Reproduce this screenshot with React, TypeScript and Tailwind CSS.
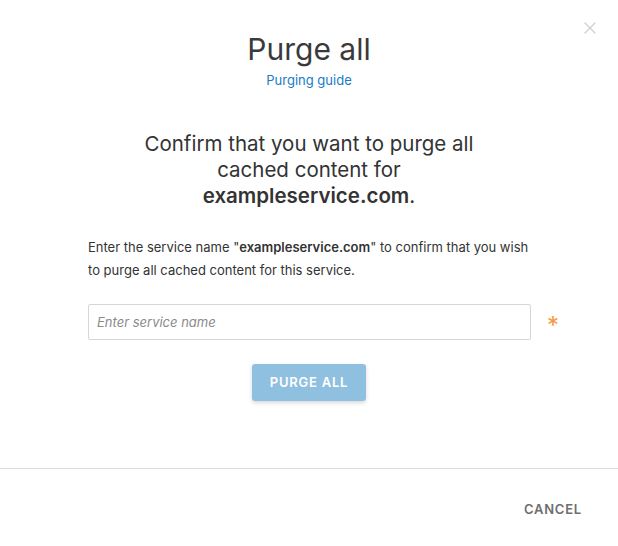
import { X } from "lucide-react";

export default function App() {
  return (
    <div
      className="relative w-[618px] h-[546px] bg-white text-[#333] flex flex-col"
      style={{ fontFamily: "Inter, 'Liberation Sans', sans-serif" }}
    >
      <button className="absolute right-[18px] top-[18px] text-[#cfcfcf]">
        <X size={20} strokeWidth={1.5} />
      </button>

      <div className="flex-1 flex flex-col items-center pt-[29px]">
        <h1 className="text-[30px] leading-[40px] text-[#3a3a3a]">Purge all</h1>
        <a className="text-[13px] leading-[16px] mt-[3px] text-[#1a7bc4]">Purging guide</a>

        <p className="mt-[43px] w-[370px] text-center text-[20.5px] leading-[26px] text-[#333]">
          Confirm that you want to purge all cached content for{" "}
          <span className="font-semibold">exampleservice.com</span>.
        </p>

        <div className="self-stretch pl-[88px] pr-[40px] mt-[27px]">
          <p className="text-[13px] leading-[23px] text-[#333] w-[450px]">
            Enter the service name "<span className="font-semibold">exampleservice.com</span>" to
            confirm that you wish to purge all cached content for this service.
          </p>

          <div className="flex items-center mt-[22px]">
            <input
              className="w-[443px] shrink-0 h-[36px] border border-[#d6d6d6] rounded-[2px] px-[8px] text-[13px] outline-none placeholder:italic placeholder:text-[#8a8a8a]"
              placeholder="Enter service name"
            />
            <span className="ml-[16px] text-[#f59a3c] text-[24px] leading-none mt-[8px]">*</span>
          </div>
        </div>

        <button className="mt-[24px] w-[114px] h-[37px] rounded-[3px] bg-[#8fc0e0] text-white text-[13px] font-semibold tracking-[0.06em] shadow-[0_2px_4px_rgba(0,0,0,0.15)]">
          PURGE ALL
        </button>
      </div>

      <div className="border-t border-[#dcdcdc] h-[78px] flex items-center justify-end pr-[36px]">
        <button className="text-[13px] font-semibold tracking-[0.06em] text-[#6e6e6e] mt-[4px]">
          CANCEL
        </button>
      </div>
    </div>
  );
}
